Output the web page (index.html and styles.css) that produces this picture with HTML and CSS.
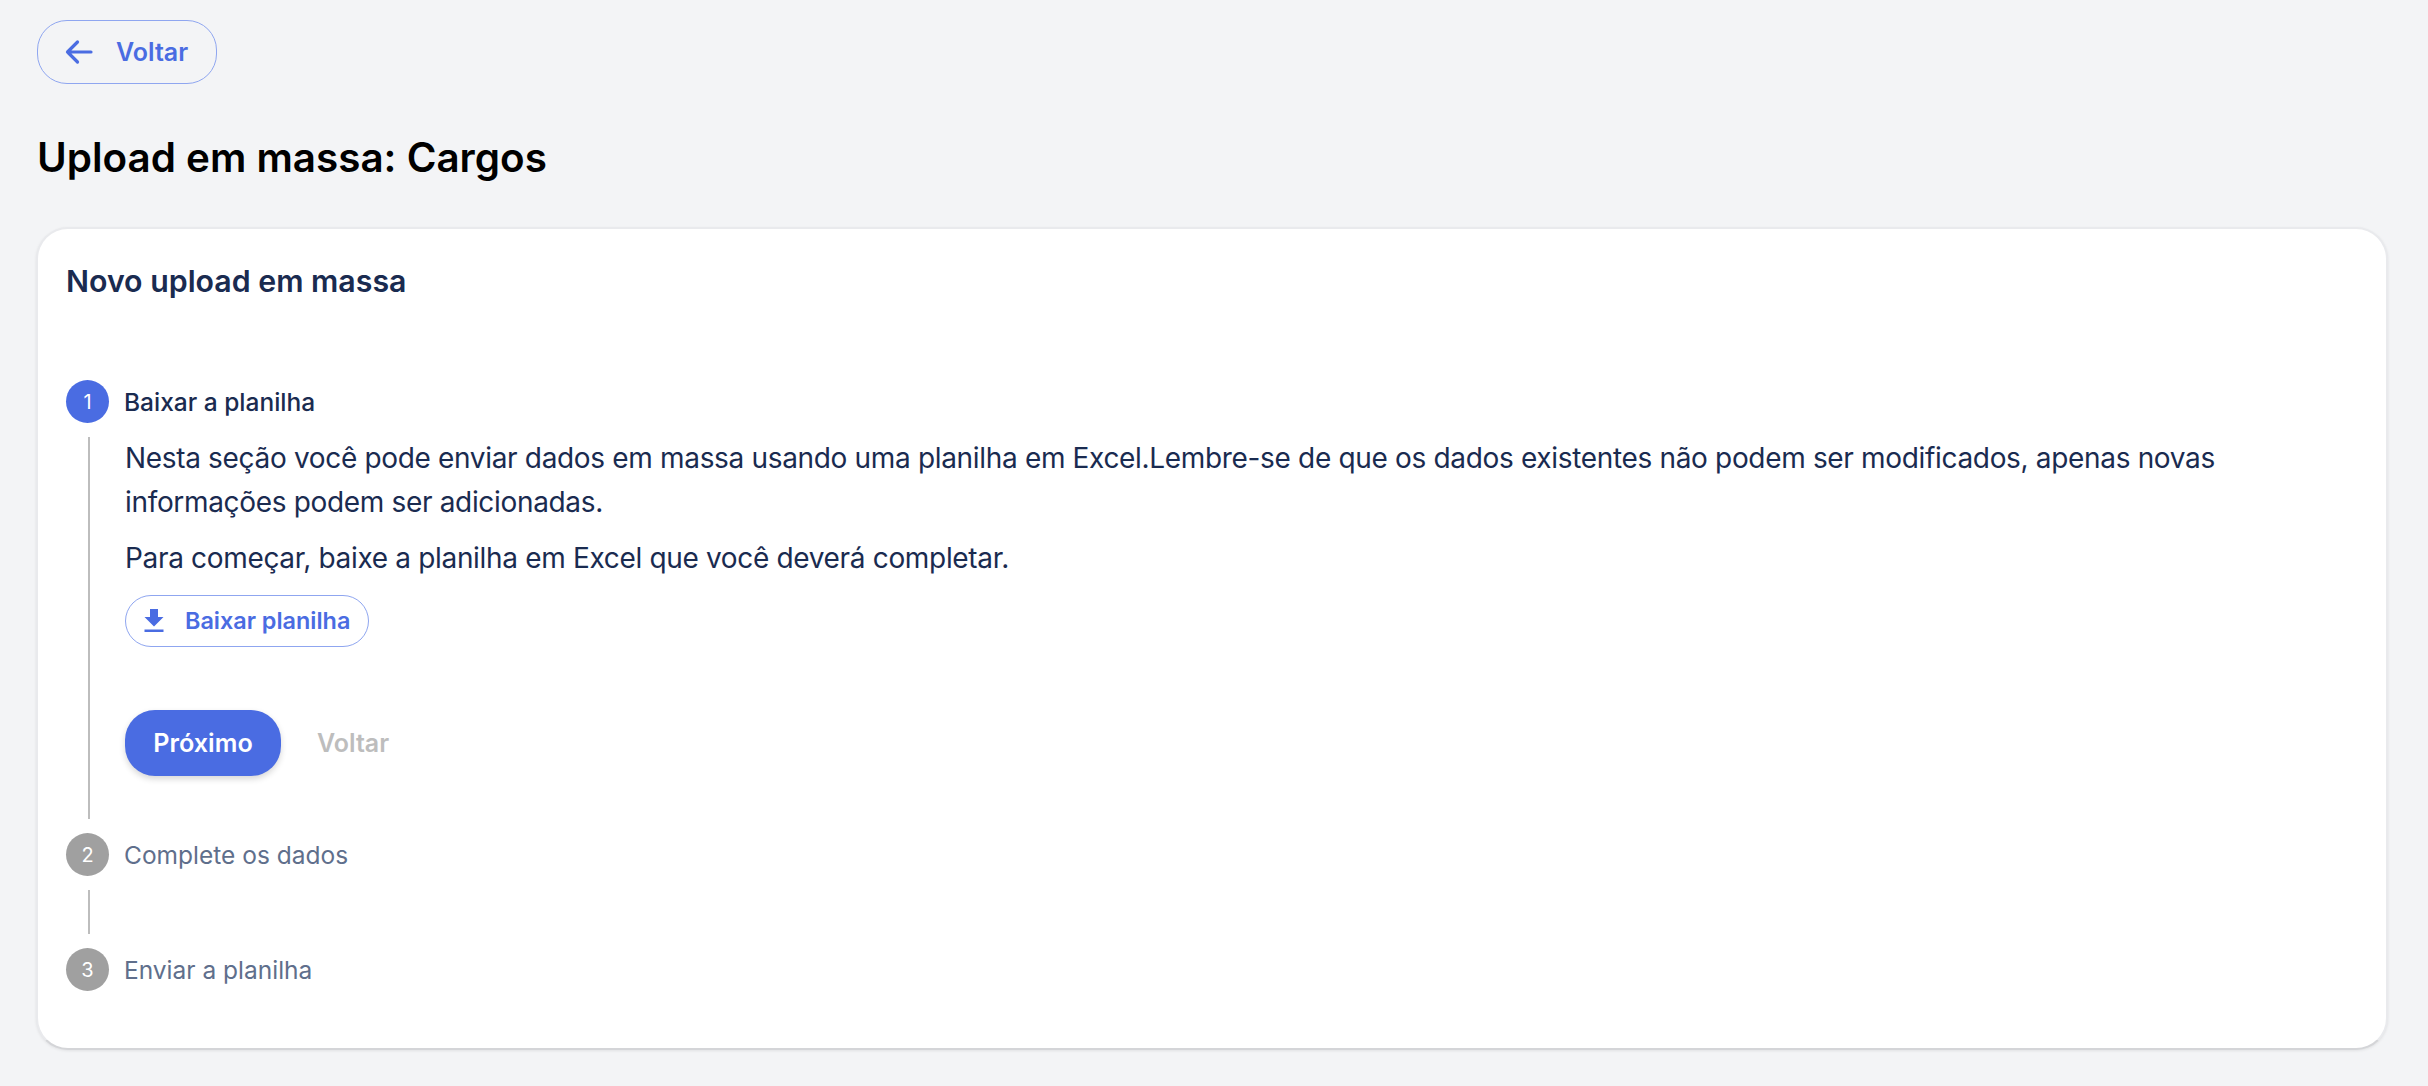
FILE: index.html
```html
<!DOCTYPE html>
<html lang="pt-BR">
<head>
<meta charset="utf-8">
<title>Upload em massa: Cargos</title>
<link rel="stylesheet" href="styles.css">
</head>
<body>
<main class="page">
  <button class="back-btn" type="button">
    <svg class="back-icon" viewBox="0 0 28 26" width="28" height="26" fill="none" stroke="currentColor" stroke-width="3.2" stroke-linecap="round" stroke-linejoin="round"><path d="M26 13H2.5M12.5 3 2.5 13l10 10"/></svg>
    <span>Voltar</span>
  </button>
  <h1 class="title">Upload em massa: Cargos</h1>
  <section class="card">
    <h2 class="card-title">Novo upload em massa</h2>
    <ol class="steps">
      <li class="step active">
        <div class="step-head"><span class="num">1</span><span class="label">Baixar a planilha</span></div>
        <div class="step-body tall">
          <p class="text">Nesta seção você pode enviar dados em massa usando uma planilha em Excel.Lembre-se de que os dados existentes não podem ser modificados, apenas novas informações podem ser adicionadas.</p>
          <p class="text second">Para começar, baixe a planilha em Excel que você deverá completar.</p>
          <button class="dl-btn" type="button">
            <svg class="dl-icon" viewBox="0 0 20 24" width="20" height="24" fill="currentColor"><path d="M6 0h8v8h5.5L10 17.5.5 8H6zM.5 20.5h19V23H.5z"/></svg>
            <span>Baixar planilha</span>
          </button>
          <div class="actions">
            <button class="next" type="button">Próximo</button>
            <button class="prev" type="button">Voltar</button>
          </div>
        </div>
      </li>
      <li class="step">
        <div class="step-head"><span class="num">2</span><span class="label">Complete os dados</span></div>
        <div class="step-body short"></div>
      </li>
      <li class="step">
        <div class="step-head"><span class="num">3</span><span class="label">Enviar a planilha</span></div>
      </li>
    </ol>
  </section>
</main>
</body>
</html>
```
FILE: styles.css
```css
* { box-sizing: border-box; }
html, body { margin: 0; padding: 0; }
body {
  background: #f3f4f6;
  font-family: Inter, "Noto Sans", sans-serif;
  height: 1086px;
  overflow: hidden;
}
button { font-family: inherit; cursor: pointer; }
.page { padding: 20px 40px 0 37px; }
.back-btn {
  display: flex;
  align-items: center;
  gap: 23px;
  width: 180px;
  height: 64px;
  padding: 0 0 0 27px;
  margin-bottom: 50px;
  background: transparent;
  border: 1px solid #8fa6f0;
  border-radius: 30px;
  color: #4a6ce2;
  font-size: 25px;
  font-weight: 600;
}
.back-icon { flex: none; }
.title {
  margin: 0 0 45px;
  font-size: 40.4px;
  line-height: 48px;
  font-weight: 600;
  color: #000;
}
.card {
  background: #fff;
  border-radius: 32px;
  border: 2px solid #e9eaed;
  border-bottom-color: #d4d5d8;
  box-shadow: 0 1px 3px rgba(0,0,0,.08);
  padding: 32px 30px 0 28px;
  margin-left: -1px;
  height: 823px;
}
.card-title {
  margin: 0 0 79px;
  font-size: 30.3px;
  line-height: 40px;
  font-weight: 600;
  color: #1a2b50;
}
.steps { list-style: none; margin: 0; padding: 0; }
.step-head { display: flex; align-items: center; gap: 15px; height: 43px; }
.num {
  flex: none;
  width: 43px;
  height: 43px;
  border-radius: 50%;
  background: #a0a0a0;
  color: #fff;
  font-size: 20px;
  display: flex;
  align-items: center;
  justify-content: center;
}
.active .num { background: #4a6ce2; }
.label { font-size: 24.5px; line-height: 40px; color: #5f6f8c; }
.active .label { color: #1a2b50; font-weight: 500; }
.step-body {
  margin: 14px 0 14px 22px;
  padding-left: 35px;
  border-left: 2px solid #bdbdbd;
}
.step-body.tall { height: 382px; }
.step-body.short { height: 44px; }
.text {
  margin: 0;
  font-size: 28px;
  letter-spacing: -0.33px;
  line-height: 43.5px;
  color: #1a2b50;
}
.text.second { margin-top: 13px; }
.dl-btn {
  display: flex;
  align-items: center;
  gap: 21px;
  height: 52px;
  width: 244px;
  margin-top: 14px;
  padding: 0 0 0 18px;
  background: #fff;
  border: 1px solid #8fa6f0;
  border-radius: 26px;
  color: #4a6ce2;
  font-size: 23.4px;
  font-weight: 600;
}
.dl-icon { flex: none; }
.actions { display: flex; align-items: center; gap: 36px; margin-top: 63px; }
.next {
  width: 156px;
  height: 66px;
  background: #4a6ce2;
  color: #fff;
  border: 0;
  border-radius: 30px;
  font-size: 25.2px;
  font-weight: 600;
  box-shadow: 0 3px 6px rgba(0,0,0,.16);
}
.prev {
  padding: 0;
  background: transparent;
  border: 0;
  color: #bdbdbd;
  font-size: 25px;
  font-weight: 600;
}
```
